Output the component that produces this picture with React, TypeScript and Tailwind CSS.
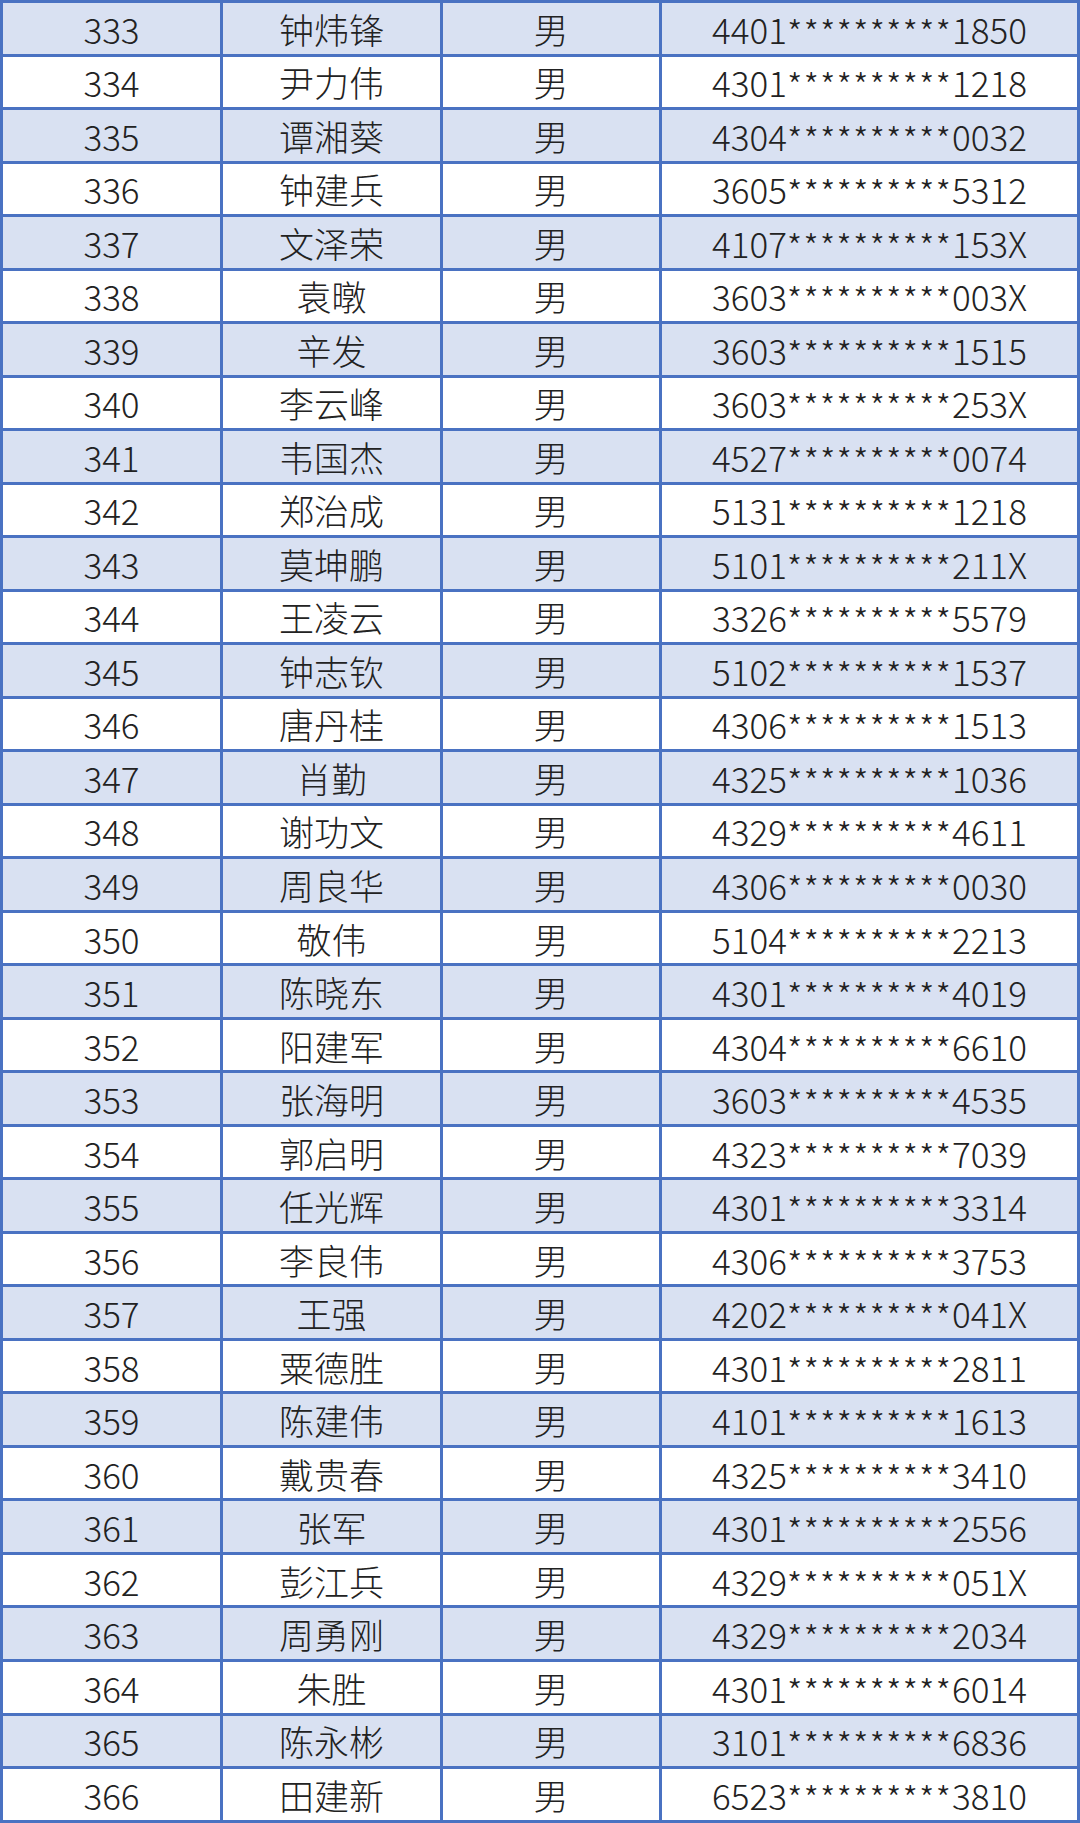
import React from "react";

const rows: [string, string, string][] = [
  ["333", "钟炜锋", "4401**********1850"],
  ["334", "尹力伟", "4301**********1218"],
  ["335", "谭湘葵", "4304**********0032"],
  ["336", "钟建兵", "3605**********5312"],
  ["337", "文泽荣", "4107**********153X"],
  ["338", "袁暾", "3603**********003X"],
  ["339", "辛发", "3603**********1515"],
  ["340", "李云峰", "3603**********253X"],
  ["341", "韦国杰", "4527**********0074"],
  ["342", "郑治成", "5131**********1218"],
  ["343", "莫坤鹏", "5101**********211X"],
  ["344", "王凌云", "3326**********5579"],
  ["345", "钟志钦", "5102**********1537"],
  ["346", "唐丹桂", "4306**********1513"],
  ["347", "肖勤", "4325**********1036"],
  ["348", "谢功文", "4329**********4611"],
  ["349", "周良华", "4306**********0030"],
  ["350", "敬伟", "5104**********2213"],
  ["351", "陈晓东", "4301**********4019"],
  ["352", "阳建军", "4304**********6610"],
  ["353", "张海明", "3603**********4535"],
  ["354", "郭启明", "4323**********7039"],
  ["355", "任光辉", "4301**********3314"],
  ["356", "李良伟", "4306**********3753"],
  ["357", "王强", "4202**********041X"],
  ["358", "粟德胜", "4301**********2811"],
  ["359", "陈建伟", "4101**********1613"],
  ["360", "戴贵春", "4325**********3410"],
  ["361", "张军", "4301**********2556"],
  ["362", "彭江兵", "4329**********051X"],
  ["363", "周勇刚", "4329**********2034"],
  ["364", "朱胜", "4301**********6014"],
  ["365", "陈永彬", "3101**********6836"],
  ["366", "田建新", "6523**********3810"],
];

function Id({ v }: { v: string }) {
  const head = v.slice(0, 4);
  const stars = v.slice(4, 14);
  const tail = v.slice(14);
  return (
    <span>
      {head}
      <span className="relative top-[3px] tracking-[1px]">{stars}</span>
      {tail}
    </span>
  );
}

export default function App() {
  return (
    <div
      className="w-[1080px] h-[1823px] bg-white text-[#222222]"
      style={{ fontFamily: '"Noto Sans CJK SC", "Noto Sans", sans-serif' }}
    >
      <table className="w-full h-full border-collapse border-[3px] border-[#4a72c2] table-fixed text-[35px] leading-none font-light">
        <colgroup>
          <col className="w-[220px]" />
          <col className="w-[220px]" />
          <col className="w-[219px]" />
          <col />
        </colgroup>
        <tbody>
          {rows.map((r, i) => (
            <tr key={r[0]} className={i % 2 === 0 ? "bg-[#d9e1f2]" : "bg-white"}>
              <td className="border-[3px] border-[#4a72c2] text-center p-0">{r[0]}</td>
              <td className="border-[3px] border-[#4a72c2] text-center p-0">{r[1]}</td>
              <td className="border-[3px] border-[#4a72c2] text-center p-0">男</td>
              <td className="border-[3px] border-[#4a72c2] text-center p-0">
                <Id v={r[2]} />
              </td>
            </tr>
          ))}
        </tbody>
      </table>
    </div>
  );
}
